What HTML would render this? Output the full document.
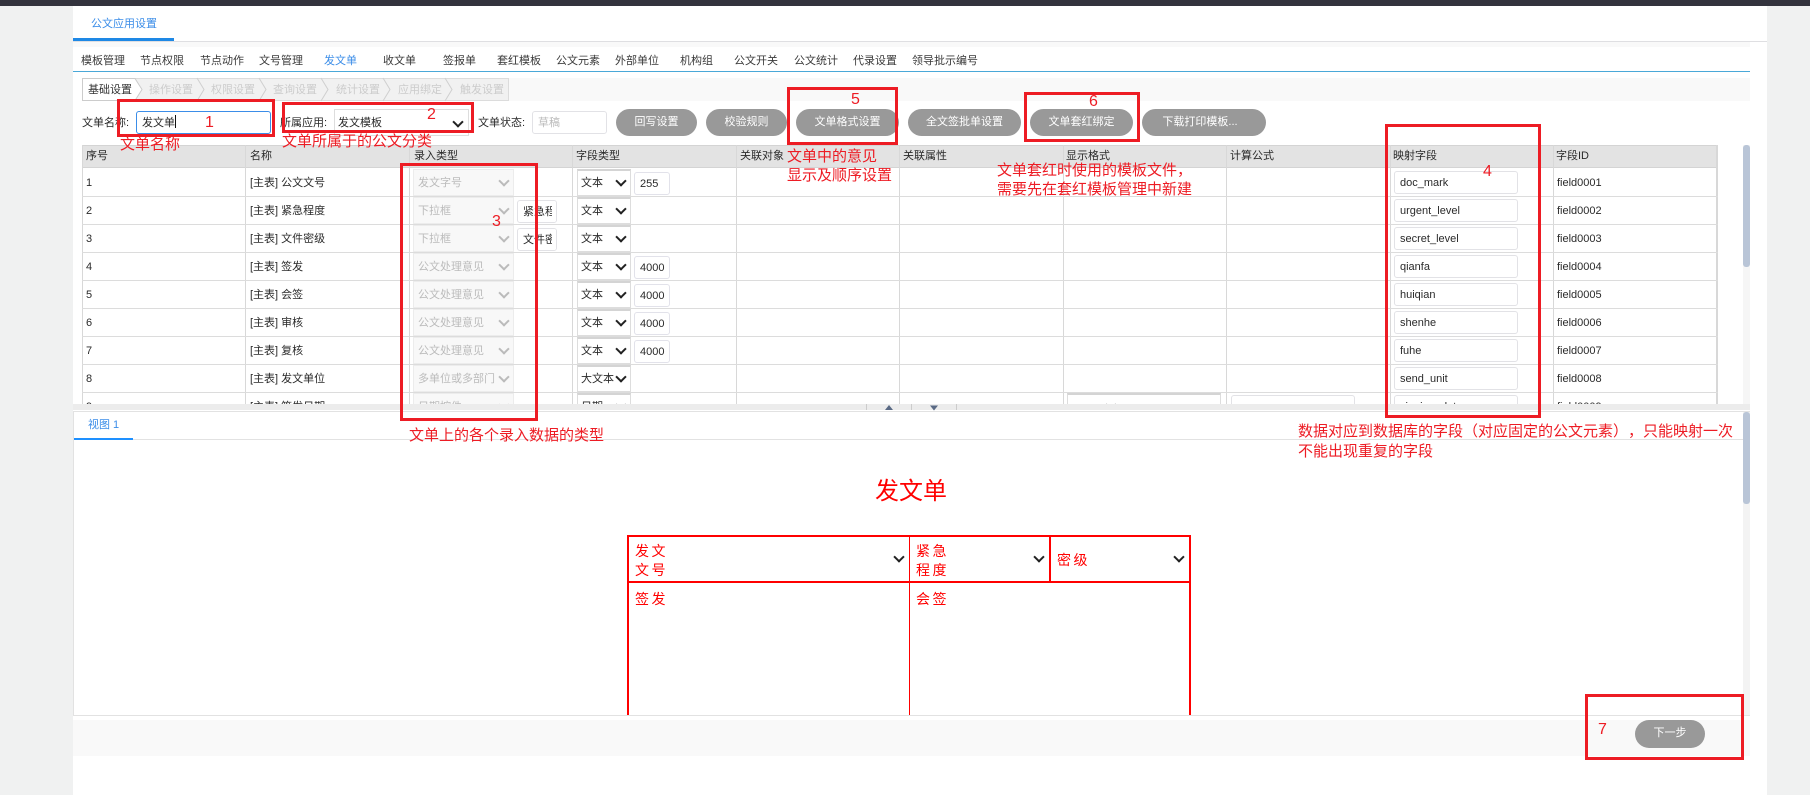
<!DOCTYPE html>
<html lang="zh"><head><meta charset="utf-8"><title>公文应用设置</title>
<style>
html,body{margin:0;padding:0;width:1810px;height:795px;overflow:hidden;background:#f0f1f1}
body{position:relative;font:11px/16px "Liberation Sans","Noto Sans CJK SC",sans-serif;color:#2a2a2a}
div,span{box-sizing:border-box}
.a{position:absolute}
.t{position:absolute;white-space:nowrap}
.nav{position:absolute;top:53px;white-space:nowrap;color:#3a3a3a}
.st{position:absolute;top:82px;color:#ccc;white-space:nowrap}
.btn{position:absolute;top:109px;height:27px;border-radius:14px;background:#999;color:#fff;text-align:center;line-height:26px;white-space:nowrap}
.h{position:absolute;top:148px;white-space:nowrap}
.vl{position:absolute;top:145px;width:1px;height:259px;background:#d8d8d8}
.hl{position:absolute;left:82px;width:1636px;height:1px;background:#dcdcdc}
.r{position:absolute;left:0;width:1750px;height:28px}
.r>*{position:absolute;white-space:nowrap}
.n{left:86px;top:7px}.nm{left:250px;top:7px}.f{left:1557px;top:7px}
.e{left:413px;top:1px;width:101px;height:27px;background:#f8f8f8;border:1px solid #ececec;color:#bbb;padding-left:4px;line-height:26px}
.e:after,.k:after,.ds:after,.fc:after{content:"";position:absolute;width:6px;height:6px;border-right:2px solid #222;border-bottom:2px solid #222;transform:rotate(45deg)}
.e:after{left:86px;top:7px;border-color:#bbb}
.k{left:577px;top:1px;width:54px;height:27px;background:#fff;border:1px solid #ddd;border-top:2px solid #d4d4d4;padding-left:3px;line-height:25px}
.k:after{left:39px;top:6px}
.l{left:634px;top:4px;width:36px;height:23px;background:#fff;border:1px solid #e2e2ea;border-radius:3px;padding-left:5px;line-height:22px}
.m{left:1394px;top:3px;width:124px;height:23px;background:#fff;border:1px solid #e2e2e6;border-radius:3px;padding-left:5px;line-height:22px}
.x{left:517px;top:4px;width:40px;height:23px;background:#fff;border:1px solid #e2e2e6;border-radius:3px;padding-left:5px;line-height:22px;overflow:hidden}
.x:after{content:"";position:absolute;right:0;top:0;bottom:0;width:4px;background:#fff}
.box{position:absolute;border:3px solid #ed1c24;z-index:5}
.ann{position:absolute;z-index:6;color:#ed1c24;font-size:15px;line-height:20px;white-space:nowrap;text-spacing-trim:space-all;font-kerning:none}
.ft{position:absolute;color:#f00;font-size:14px;line-height:18px;letter-spacing:2.5px;font-family:"WenQuanYi Zen Hei","Noto Sans CJK SC",sans-serif;white-space:nowrap}
.fc{position:absolute;width:10px;height:8px}
.fc:after{left:1px;top:-3px}
</style></head><body>

<div class="a" style="left:0;top:0;width:1810px;height:6px;background:#33333d"></div>
<div class="a" style="left:73px;top:6px;width:1694px;height:789px;background:#fff"></div>

<!-- top tab -->
<div class="t" style="left:91px;top:16px;color:#3b8de8">公文应用设置</div>
<div class="a" style="left:73px;top:38px;width:101px;height:3px;background:#1e88e5"></div>
<div class="a" style="left:73px;top:41px;width:1694px;height:1px;background:#dfdfe2"></div>
<div class="a" style="left:73px;top:42px;width:1677px;height:5px;background:#f9f9f9"></div>

<!-- nav -->
<div class="nav" style="left:81px">模板管理</div>
<div class="nav" style="left:140px">节点权限</div>
<div class="nav" style="left:200px">节点动作</div>
<div class="nav" style="left:259px">文号管理</div>
<div class="nav" style="left:324px;color:#3b8de8">发文单</div>
<div class="nav" style="left:383px">收文单</div>
<div class="nav" style="left:443px">签报单</div>
<div class="nav" style="left:497px">套红模板</div>
<div class="nav" style="left:556px">公文元素</div>
<div class="nav" style="left:615px">外部单位</div>
<div class="nav" style="left:680px">机构组</div>
<div class="nav" style="left:734px">公文开关</div>
<div class="nav" style="left:794px">公文统计</div>
<div class="nav" style="left:853px">代录设置</div>
<div class="nav" style="left:912px">领导批示编号</div>
<div class="a" style="left:73px;top:71px;width:1677px;height:1px;background:#4aa8d8"></div>

<!-- steps -->
<div class="a" style="left:82px;top:78px;width:1668px;height:23px;background:#f9f9f9"></div>
<svg class="a" style="left:0;top:0" width="520" height="110">
<rect x="82.5" y="78.5" width="426" height="22" fill="#f1f1f1" stroke="#dcdcdc"/>
<polygon points="82.5,78.5 135,78.5 142,89.5 135,100.5 82.5,100.5" fill="#fff" stroke="#ccc"/>
<g fill="none" stroke="#cfcfcf"><polyline points="197,78 204,89.5 197,101"/><polyline points="259,78 266,89.5 259,101"/><polyline points="321,78 328,89.5 321,101"/><polyline points="383,78 390,89.5 383,101"/><polyline points="445,78 452,89.5 445,101"/></g>
</svg>
<div class="st" style="left:88px;color:#333">基础设置</div>
<div class="st" style="left:149px">操作设置</div>
<div class="st" style="left:211px">权限设置</div>
<div class="st" style="left:273px">查询设置</div>
<div class="st" style="left:336px">统计设置</div>
<div class="st" style="left:398px">应用绑定</div>
<div class="st" style="left:460px">触发设置</div>

<!-- form row -->
<div class="t" style="left:82px;top:115px">文单名称:</div>
<div class="a" style="left:136px;top:111px;width:135px;height:23px;border:1px solid #3b8de8;border-radius:3px;background:#fff;padding-left:5px;line-height:22px">发文单<span style="display:inline-block;width:1px;height:13px;background:#111;vertical-align:-2px"></span></div>
<div class="t" style="left:280px;top:115px">所属应用:</div>
<div class="a" style="left:334px;top:109px;width:135px;height:27px;border:1px solid #ddd;background:#fff;padding-left:3px;line-height:27px">发文模板</div>
<div class="fc" style="left:453px;top:121px"></div>
<div class="t" style="left:478px;top:115px">文单状态:</div>
<div class="a" style="left:532px;top:111px;width:75px;height:23px;border:1px solid #e2e2e6;border-radius:3px;background:#fff;padding-left:5px;line-height:22px;color:#bbb">草稿</div>
<div class="btn" style="left:616px;width:81px">回写设置</div>
<div class="btn" style="left:706px;width:81px">校验规则</div>
<div class="btn" style="left:796px;width:103px">文单格式设置</div>
<div class="btn" style="left:908px;width:113px">全文签批单设置</div>
<div class="btn" style="left:1030px;width:103px">文单套红绑定</div>
<div class="btn" style="left:1142px;width:124px;padding-right:8px">下载打印模板...</div>

<!-- table -->
<div class="a" style="left:0;top:0;width:1750px;height:404px;overflow:hidden">
<div class="a" style="left:82px;top:145px;width:1636px;height:23px;background:#e3e3e3;border-top:1px solid #d4d4d4;border-bottom:1px solid #d4d4d4"></div>
<div class="vl" style="left:82px"></div><div class="vl" style="left:245px"></div><div class="vl" style="left:409px"></div><div class="vl" style="left:572px"></div><div class="vl" style="left:736px"></div><div class="vl" style="left:899px"></div><div class="vl" style="left:1063px"></div><div class="vl" style="left:1226px"></div><div class="vl" style="left:1390px"></div><div class="vl" style="left:1553px"></div><div class="vl" style="left:1716px;width:2px"></div>
<div class="h" style="left:86px">序号</div><div class="h" style="left:250px">名称</div><div class="h" style="left:414px">录入类型</div><div class="h" style="left:576px">字段类型</div><div class="h" style="left:740px">关联对象</div><div class="h" style="left:903px">关联属性</div><div class="h" style="left:1066px">显示格式</div><div class="h" style="left:1230px">计算公式</div><div class="h" style="left:1393px">映射字段</div><div class="h" style="left:1556px">字段ID</div>
<div class="hl" style="top:196px"></div><div class="hl" style="top:224px"></div><div class="hl" style="top:252px"></div><div class="hl" style="top:280px"></div><div class="hl" style="top:308px"></div><div class="hl" style="top:336px"></div><div class="hl" style="top:364px"></div><div class="hl" style="top:392px"></div>

<div class="r" style="top:168px"><span class="n">1</span><span class="nm">[主表] 公文文号</span><div class="e">发文字号</div><div class="k">文本</div><div class="l">255</div><div class="m">doc_mark</div><span class="f">field0001</span></div>
<div class="r" style="top:196px"><span class="n">2</span><span class="nm">[主表] 紧急程度</span><div class="e">下拉框</div><div class="x">紧急程度</div><div class="k">文本</div><div class="m">urgent_level</div><span class="f">field0002</span></div>
<div class="r" style="top:224px"><span class="n">3</span><span class="nm">[主表] 文件密级</span><div class="e">下拉框</div><div class="x">文件密级</div><div class="k">文本</div><div class="m">secret_level</div><span class="f">field0003</span></div>
<div class="r" style="top:252px"><span class="n">4</span><span class="nm">[主表] 签发</span><div class="e">公文处理意见</div><div class="k">文本</div><div class="l">4000</div><div class="m">qianfa</div><span class="f">field0004</span></div>
<div class="r" style="top:280px"><span class="n">5</span><span class="nm">[主表] 会签</span><div class="e">公文处理意见</div><div class="k">文本</div><div class="l">4000</div><div class="m">huiqian</div><span class="f">field0005</span></div>
<div class="r" style="top:308px"><span class="n">6</span><span class="nm">[主表] 审核</span><div class="e">公文处理意见</div><div class="k">文本</div><div class="l">4000</div><div class="m">shenhe</div><span class="f">field0006</span></div>
<div class="r" style="top:336px"><span class="n">7</span><span class="nm">[主表] 复核</span><div class="e">公文处理意见</div><div class="k">文本</div><div class="l">4000</div><div class="m">fuhe</div><span class="f">field0007</span></div>
<div class="r" style="top:364px"><span class="n">8</span><span class="nm">[主表] 发文单位</span><div class="e">多单位或多部门</div><div class="k">大文本</div><div class="m">send_unit</div><span class="f">field0008</span></div>
<div class="r" style="top:392px"><span class="n">9</span><span class="nm">[主表] 签发日期</span><div class="e">日期控件</div><div class="k">日期</div><div class="k ds" style="left:1067px;width:154px"></div><div class="m" style="left:1231px"></div><div class="m">signing_date</div><span class="f">field0009</span></div>
</div>

<!-- table scrollbar -->
<div class="a" style="left:1743px;top:145px;width:7px;height:259px;background:#f6f6f6"></div>
<div class="a" style="left:1743px;top:145px;width:7px;height:122px;background:#b9c5d7;border-radius:3px"></div>

<!-- splitter -->
<div class="a" style="left:73px;top:404px;width:1677px;height:6px;background:#ececec"></div>
<div class="a" style="left:73px;top:411px;width:1677px;height:1px;background:#e2e2e2"></div>
<div class="a" style="left:866px;top:404px;width:91px;height:6px;border-left:1px solid #ccc;border-right:1px solid #ccc"></div>
<div class="a" style="left:911px;top:404px;width:1px;height:6px;background:#ccc"></div>
<svg class="a" style="left:880px;top:404px" width="64" height="7"><polygon points="9,1 13,6 5,6" fill="#5a6a85"/><polygon points="50,1.5 58,1.5 54,6.5" fill="#5a6a85"/></svg>

<!-- lower panel -->
<div class="a" style="left:73px;top:412px;width:1px;height:303px;background:#e2e2e2"></div>
<div class="t" style="left:88px;top:417px;color:#3b8de8">视图 1</div>
<div class="a" style="left:74px;top:439px;width:1670px;height:1px;background:#e2e2e2"></div>
<div class="a" style="left:74px;top:438px;width:59px;height:2px;background:#1e90ff"></div>
<div class="a" style="left:1743px;top:412px;width:7px;height:303px;background:#f3f3f3"></div>
<div class="a" style="left:1743px;top:412px;width:7px;height:92px;background:#b9c5d7;border-radius:3px"></div>

<div class="t" style="left:875px;top:477px;color:#f00;font-size:24px;line-height:30px">发文单</div>

<!-- red form -->
<div class="a" style="left:0;top:0;width:1810px;height:715px;overflow:hidden">
<div class="a" style="left:627px;top:535px;width:564px;height:200px;border:2px solid #f00"></div>
<div class="a" style="left:627px;top:581px;width:564px;height:2px;background:#f00"></div>
<div class="a" style="left:909px;top:535px;width:1px;height:200px;background:#f00"></div>
<div class="a" style="left:1049px;top:535px;width:2px;height:47px;background:#f00"></div>
<div class="ft" style="left:635px;top:542px">发文</div><div class="ft" style="left:635px;top:561px">文号</div>
<div class="ft" style="left:916px;top:542px">紧急</div><div class="ft" style="left:916px;top:561px">程度</div>
<div class="ft" style="left:1057px;top:551px">密级</div>
<div class="ft" style="left:635px;top:590px">签发</div><div class="ft" style="left:916px;top:590px">会签</div>
<div class="fc" style="left:894px;top:556px"></div><div class="fc" style="left:1034px;top:556px"></div><div class="fc" style="left:1174px;top:556px"></div>
</div>

<!-- footer -->
<div class="a" style="left:73px;top:715px;width:1677px;height:1px;background:#e2e2e2"></div>
<div class="a" style="left:73px;top:720px;width:1677px;height:36px;background:#f9f9f9"></div>
<div class="btn" style="left:1635px;top:720px;width:70px;height:28px;line-height:27px">下一步</div>

<!-- annotations -->
<div class="box" style="left:117px;top:99px;width:158px;height:38px"></div>
<div class="box" style="left:282px;top:102px;width:192px;height:31px"></div>
<div class="box" style="left:400px;top:163px;width:138px;height:258px"></div>
<div class="box" style="left:1385px;top:124px;width:156px;height:294px"></div>
<div class="box" style="left:787px;top:87px;width:111px;height:58px"></div>
<div class="box" style="left:1024px;top:92px;width:116px;height:50px"></div>
<div class="box" style="left:1585px;top:694px;width:159px;height:66px"></div>

<div class="ann" style="left:205px;top:113px;font-size:16px">1</div>
<div class="ann" style="left:120px;top:135px">文单名称</div>
<div class="ann" style="left:427px;top:105px;font-size:16px">2</div>
<div class="ann" style="left:282px;top:132px">文单所属于的公文分类</div>
<div class="ann" style="left:492px;top:212px;font-size:16px">3</div>
<div class="ann" style="left:409px;top:426px">文单上的各个录入数据的类型</div>
<div class="ann" style="left:1483px;top:162px;font-size:16px">4</div>
<div class="ann" style="left:851px;top:90px;font-size:16px">5</div>
<div class="ann" style="left:1089px;top:92px;font-size:16px">6</div>
<div class="ann" style="left:1598px;top:720px;font-size:16px">7</div>
<div class="ann" style="left:787px;top:147px">文单中的意见</div>
<div class="ann" style="left:787px;top:166px">显示及顺序设置</div>
<div class="ann" style="left:997px;top:161px">文单套红时使用的模板文件，</div>
<div class="ann" style="left:997px;top:180px">需要先在套红模板管理中新建</div>
<div class="ann" style="left:1298px;top:422px">数据对应到数据库的字段（对应固定的公文元素），只能映射一次</div>
<div class="ann" style="left:1298px;top:442px">不能出现重复的字段</div>

</body></html>
